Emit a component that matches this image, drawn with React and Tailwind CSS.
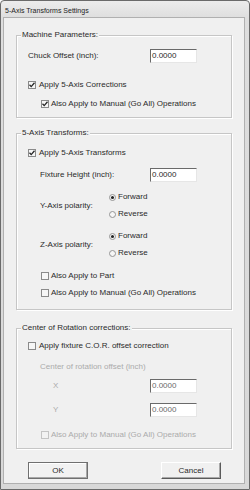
import React from "react";

const font = { fontFamily: '"Liberation Sans", Arial, sans-serif' };

function Check({ checked, disabled }) {
  return (
    <span
      className={`flex h-[8px] w-[8px] shrink-0 items-center justify-center border ${
        disabled ? "border-[#c4c4c4] bg-[#f2f2f2]" : "border-[#8a8a8a] bg-[#f6f6f6]"
      }`}
    >
      {checked && (
        <svg width="6" height="6" viewBox="0 0 6 6">
          <path d="M0.5 2.8 L2.2 4.6 L5.5 0.8" fill="none" stroke="#252525" strokeWidth="1.3" />
        </svg>
      )}
    </span>
  );
}

function CheckRow({ checked, disabled, label, indent, mt, gap }) {
  return (
    <div className={`flex h-[10px] items-center ${indent} ${mt}`}>
      <Check checked={checked} disabled={disabled} />
      <span className={`${gap} whitespace-nowrap ${disabled ? "text-[#ababab]" : "text-[#2a2a2a]"}`}>
        {label}
      </span>
    </div>
  );
}

function Radio({ checked, label, mt }) {
  return (
    <div className={`flex h-[10px] items-center ${mt}`}>
      <span className="flex h-[7px] w-[7px] shrink-0 items-center justify-center rounded-full border border-[#959595] bg-[#f6f6f6]">
        {checked && <span className="h-[3px] w-[3px] rounded-full bg-[#222]" />}
      </span>
      <span className="ml-[2px] whitespace-nowrap">{label}</span>
    </div>
  );
}

function Input({ disabled }) {
  return (
    <div
      className={`flex h-[14px] w-[47px] items-center border-t border-l border-t-[#6a6a6a] border-l-[#6a6a6a] border-r border-b border-r-[#e6e6e6] border-b-[#e6e6e6] bg-white pl-[1px] ${
        disabled ? "text-[#6a6a6a]" : "text-[#2a2a2a]"
      }`}
    >
      0.0000
    </div>
  );
}

function Group({ title, height, mt, children }) {
  return (
    <div
      className={`relative mx-[12px] ${mt} ${height} border border-[#c6c6c6] shadow-[1px_1px_0_#ffffff,inset_1px_1px_0_#ffffff]`}
    >
      <span className="absolute left-[4px] top-[-6px] bg-[#f0f0f0] px-[1px] leading-[10px] text-[#2a2a2a]">
        {title}
      </span>
      {children}
    </div>
  );
}

function Polarity({ label, mt }) {
  return (
    <div className={`flex items-center pl-[23px] ${mt}`}>
      <span className="w-[69px] whitespace-nowrap">{label}</span>
      <div className="flex flex-col">
        <Radio checked label="Forward" mt="" />
        <Radio label="Reverse" mt="mt-[7px]" />
      </div>
    </div>
  );
}

export default function App() {
  return (
    <div
      className="flex h-[490px] w-[250px] flex-col overflow-hidden rounded-t-[4px] border border-[#6a6a6a] bg-[linear-gradient(180deg,#ececec_0px,#dedede_17px,#d8d8d8_100%)] text-[8px] leading-[10px] text-[#2a2a2a]"
      style={font}
    >
      <div className="flex h-[16px] shrink-0 items-center pl-[4px] pt-[3px] text-[7px] text-[#222]">
        5-Axis Transforms Settings
      </div>
      <div className="ml-[2px] mr-[4px] flex h-[467px] flex-col border border-[#b0b0b0] bg-[#f0f0f0]">
        {/* Machine Parameters */}
        <Group title="Machine Parameters:" height="h-[83px]" mt="mt-[17px]">
          <div className="mt-[13px] flex h-[14px] items-center pl-[11px]">
            <span className="w-[122px] whitespace-nowrap">Chuck Offset (inch):</span>
            <Input />
          </div>
          <CheckRow checked label="Apply 5-Axis Corrections" indent="pl-[11px]" mt="mt-[17px]" gap="ml-[3px]" />
          <CheckRow checked label="Also Apply to Manual (Go All) Operations" indent="pl-[24px]" mt="mt-[9px]" gap="ml-[2px]" />
        </Group>

        {/* 5-Axis Transforms */}
        <Group title="5-Axis Transforms:" height="h-[177px]" mt="mt-[15px]">
          <CheckRow checked label="Apply 5-Axis Transforms" indent="pl-[11px]" mt="mt-[14px]" gap="ml-[3px]" />
          <div className="mt-[10px] flex h-[14px] items-center pl-[23px]">
            <span className="w-[110px] whitespace-nowrap">Fixture Height (inch):</span>
            <Input />
          </div>
          <Polarity label="Y-Axis polarity:" mt="mt-[10px]" />
          <Polarity label="Z-Axis polarity:" mt="mt-[12px]" />
          <CheckRow label="Also Apply to Part" indent="pl-[24px]" mt="mt-[13px]" gap="ml-[2px]" />
          <CheckRow label="Also Apply to Manual (Go All) Operations" indent="pl-[24px]" mt="mt-[7px]" gap="ml-[2px]" />
        </Group>

        {/* Center of Rotation */}
        <Group title="Center of Rotation corrections:" height="h-[121px]" mt="mt-[18px]">
          <CheckRow label="Apply fixture C.O.R. offset correction" indent="pl-[11px]" mt="mt-[12px]" gap="ml-[3px]" />
          <div className="mt-[11px] h-[10px] whitespace-nowrap pl-[23px] text-[#ababab]">
            Center of rotation offset (inch)
          </div>
          <div className="mt-[7px] flex h-[14px] items-center pl-[36px]">
            <span className="w-[97px] text-[#ababab]">X</span>
            <Input disabled />
          </div>
          <div className="mt-[10px] flex h-[14px] items-center pl-[36px]">
            <span className="w-[97px] text-[#ababab]">Y</span>
            <Input disabled />
          </div>
          <CheckRow disabled label="Also Apply to Manual (Go All) Operations" indent="pl-[24px]" mt="mt-[13px]" gap="ml-[2px]" />
        </Group>

        <div className="mt-[13px] flex justify-between pl-[24px] pr-[23px]">
          <button className="flex h-[17px] w-[60px] items-center justify-center border border-[#707070] bg-[#f2f2f2] shadow-[inset_-1px_-1px_0_#a8a8a8,inset_1px_1px_0_#ffffff] text-[8px] text-[#2a2a2a]">
            OK
          </button>
          <button className="flex h-[17px] w-[60px] items-center justify-center border border-t-[#ffffff] border-l-[#ffffff] border-r-[#5a5a5a] border-b-[#5a5a5a] bg-[#f0f0f0] shadow-[inset_-1px_-1px_0_#a8a8a8] text-[8px] text-[#2a2a2a]">
            Cancel
          </button>
        </div>
      </div>
    </div>
  );
}
